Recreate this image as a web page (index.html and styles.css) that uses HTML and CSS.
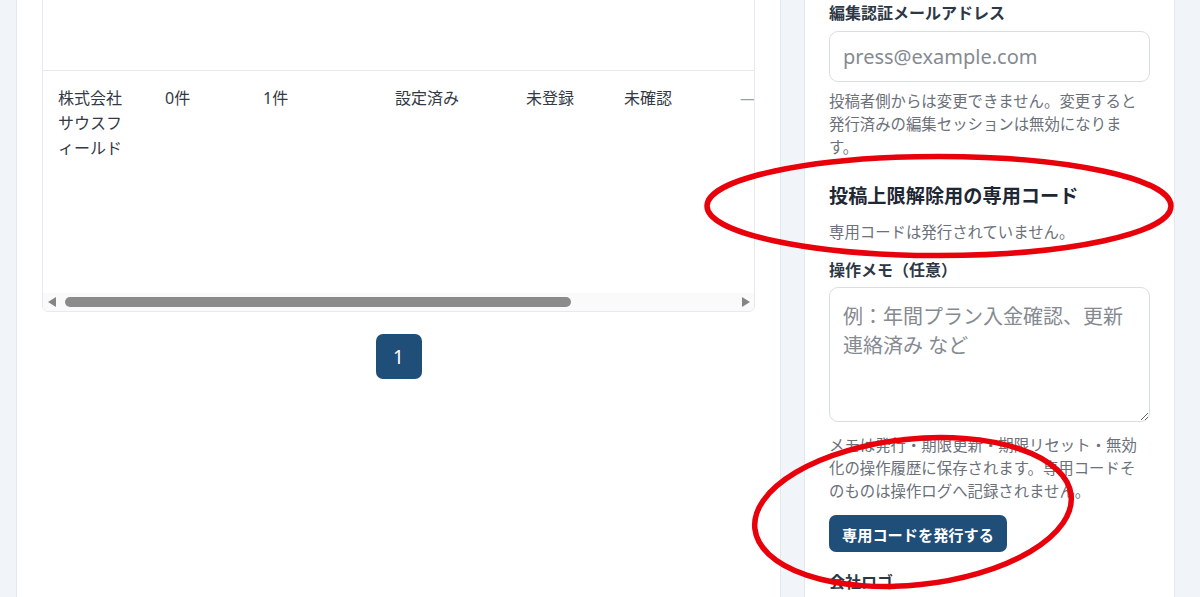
FILE: index.html
```html
<!DOCTYPE html>
<html lang="ja">
<head>
<meta charset="utf-8">
<title>企業管理</title>
<link rel="stylesheet" href="styles.css">
</head>
<body>
<div class="page">
  <main class="main-panel">
    <div class="table-wrap">
      <div class="table-scroll">
        <table class="company-table">
          <colgroup>
            <col class="c-name"><col class="c-posts"><col class="c-drafts"><col class="c-mail"><col class="c-logo"><col class="c-check"><col class="c-code"><col class="c-actions">
          </colgroup>
          <tbody>
            <tr>
              <td>株式会社ノースブリッジ</td>
              <td>3件</td>
              <td>0件</td>
              <td>設定済み</td>
              <td>登録済み</td>
              <td>確認済み</td>
              <td class="dash">—</td>
              <td>
                <div class="actions">
                  <button class="act">編集</button>
                  <button class="act">詳細</button>
                  <button class="act">履歴</button>
                  <button class="act">削除</button>
                </div>
              </td>
            </tr>
            <tr>
              <td>株式会社サウスフィールド</td>
              <td>0件</td>
              <td>1件</td>
              <td>設定済み</td>
              <td>未登録</td>
              <td>未確認</td>
              <td class="dash">—</td>
              <td>
                <div class="actions">
                  <button class="act">編集</button>
                  <button class="act">詳細</button>
                  <button class="act">履歴</button>
                  <button class="act">コード発行</button>
                  <button class="act">削除</button>
                </div>
              </td>
            </tr>
          </tbody>
        </table>
      </div>
      <div class="hscroll" aria-hidden="true">
        <span class="hs-arrow hs-left"></span>
        <span class="hs-thumb"></span>
        <span class="hs-arrow hs-right"></span>
      </div>
    </div>
    <nav class="pagination">
      <a class="page-btn" href="#">1</a>
    </nav>
  </main>

  <aside class="side-panel">
    <label class="field-label">会社名</label>
    <input class="text-input" type="text" value="株式会社サウスフィールド">

    <label class="field-label first-visible">編集認証メールアドレス</label>
    <input class="text-input" type="email" placeholder="press@example.com">
    <p class="help">投稿者側からは変更できません。変更すると発行済みの編集セッションは無効になります。</p>

    <h2 class="section-title">投稿上限解除用の専用コード</h2>
    <p class="status">専用コードは発行されていません。</p>

    <label class="field-label memo-label">操作メモ（任意）</label>
    <textarea class="memo" placeholder="例：年間プラン入金確認、更新連絡済み など"></textarea>
    <p class="help help-memo">メモは発行・期限更新・期限リセット・無効化の操作履歴に保存されます。専用コードそのものは操作ログへ記録されません。</p>

    <button class="btn-primary" type="button">専用コードを発行する</button>

    <label class="field-label logo-label">会社ロゴ</label>
    <div class="logo-box"></div>
  </aside>
</div>

<svg class="annotations" width="1200" height="597" viewBox="0 0 1200 597" aria-hidden="true">
  <ellipse cx="939" cy="206" rx="232" ry="49.5" fill="none" stroke="#e8000a" stroke-width="5.5"/>
  <ellipse cx="913" cy="512" rx="159" ry="73" fill="none" stroke="#e8000a" stroke-width="5.5" transform="rotate(-6 913 512)"/>
</svg>
</body>
</html>
```

FILE: styles.css
```css
html, body {
  margin: 0;
  padding: 0;
}

body {
  background: #f1f4f8;
  font-family: "Noto Sans", "Noto Sans CJK JP", sans-serif;
  color: #2d3745;
  overflow: hidden;
  height: 597px;
}

.page {
  display: grid;
  grid-template-columns: 765px 371px;
  column-gap: 23px;
  padding-left: 16px;
  margin-top: -139px;
  align-items: start;
}

.main-panel,
.side-panel {
  background: #fff;
  border: 1px solid #e3e8ee;
  border-radius: 8px;
  min-height: 1000px;
  box-sizing: border-box;
}

.main-panel {
  padding: 24px 25px;
}

.table-wrap {
  border: 1px solid #e6e9ee;
  border-radius: 6px;
  overflow: hidden;
}

.table-scroll {
  overflow: hidden;
}

.company-table {
  border-collapse: collapse;
  table-layout: fixed;
  width: 958px;
}

.c-name { width: 107px; }
.c-posts { width: 98px; }
.c-drafts { width: 132px; }
.c-mail { width: 131px; }
.c-logo { width: 98px; }
.c-check { width: 116px; }
.c-code { width: 116px; }
.c-actions { width: 160px; }

.company-table td {
  padding: 15px;
  vertical-align: top;
  font-size: 16px;
  line-height: 25px;
  color: #333a45;
}

.company-table tr + tr td {
  border-top: 1px solid #e6e9ee;
  padding-bottom: 14px;
}

.company-table td.dash {
  color: #9aa0a8;
}

.actions {
  display: flex;
  flex-direction: column;
  gap: 7px;
}

.act {
  height: 33px;
  border: 1px solid #cfd6df;
  background: #fff;
  border-radius: 6px;
  font-family: inherit;
  font-size: 14px;
  color: #1f4e79;
}

/* horizontal scrollbar of the table */
.hscroll {
  display: flex;
  align-items: center;
  height: 18px;
  padding: 0 4px 0 5px;
  background: #fafafa;
}

.hs-arrow {
  width: 0;
  height: 0;
  border-top: 5px solid transparent;
  border-bottom: 5px solid transparent;
}

.hs-left {
  border-right: 8px solid #858585;
}

.hs-right {
  margin-left: auto;
  border-left: 8px solid #858585;
}

.hs-thumb {
  margin-left: 9px;
  width: 506px;
  height: 10px;
  border-radius: 5px;
  background: #8b8b8b;
}

.pagination {
  display: flex;
  justify-content: center;
  margin-top: 22px;
}

.page-btn {
  width: 46px;
  height: 45px;
  border-radius: 7px;
  background: #1f4e79;
  color: #fff;
  font-size: 19px;
  text-decoration: none;
  display: flex;
  align-items: center;
  justify-content: center;
}

.side-panel {
  padding: 24px;
}

.field-label {
  display: block;
  font-weight: 700;
  font-size: 16px;
  line-height: 24px;
  color: #2d3745;
  margin-bottom: 6px;
}

.first-visible {
  margin-top: 34px;
}

.text-input {
  display: block;
  width: 100%;
  box-sizing: border-box;
  height: 51px;
  border: 1px solid #d9dee5;
  border-radius: 9px;
  padding: 0 13px;
  font-family: inherit;
  font-size: 20px;
  color: #333a45;
  background: #fff;
}

.text-input::placeholder,
.memo::placeholder {
  color: #858a91;
}

.help {
  margin: 8px 0 0;
  font-size: 15.4px;
  line-height: 23px;
  color: #6b7079;
}

.section-title {
  margin: 23px 0 0;
  font-size: 19.2px;
  line-height: 27px;
  font-weight: 700;
  color: #1e2733;
}

.status {
  margin: 12px 0 0;
  font-size: 15.4px;
  line-height: 23px;
  color: #6b7079;
}

.memo-label {
  margin-top: 14px;
  margin-bottom: 5px;
}

.memo {
  display: block;
  width: 100%;
  height: 135px;
  box-sizing: border-box;
  border: 1px solid #d9dee5;
  border-radius: 9px;
  padding: 14px 13px;
  font-family: inherit;
  font-size: 20px;
  line-height: 29px;
  color: #333a45;
  resize: vertical;
}

.help-memo {
  margin-top: 12px;
}

.btn-primary {
  display: block;
  margin-top: 12px;
  height: 37px;
  padding: 0 13px;
  border: 0;
  border-radius: 7px;
  background: #1f4e79;
  color: #fff;
  font-family: inherit;
  font-weight: 700;
  font-size: 15.2px;
}

.logo-label {
  margin-top: 18px;
}

.logo-box {
  height: 120px;
  border: 1px dashed #d9dee5;
  border-radius: 9px;
}

.annotations {
  position: fixed;
  top: 0;
  left: 0;
  pointer-events: none;
}
```
